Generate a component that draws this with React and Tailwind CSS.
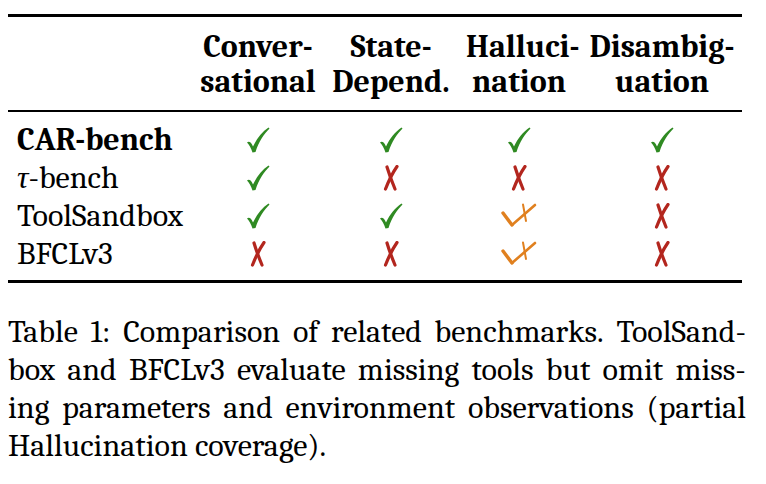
const Check = () => (
  <svg width="24" height="26" viewBox="0 0 24 26" className="inline-block">
    <path
      fill="#2f8a22"
      d="M1 15.5 C3 14 5 15 7 19.5 C11 11 16 5 22.5 0.5 L23.5 1.5 C18 7 13 14 9.5 25 L6.5 25.5 C5 21 3 17.5 1 15.5 Z"
    />
  </svg>
);

const Cross = () => (
  <svg width="18" height="26" viewBox="0 0 18 26" className="inline-block">
    <g fill="none" stroke="#b3261e" strokeWidth="3.2" strokeLinecap="round">
      <path d="M5 2 Q8 12 13 24" />
      <path d="M15 1.5 Q9 10 3.5 24" />
    </g>
  </svg>
);

const Partial = () => (
  <svg width="36" height="26" viewBox="0 0 36 26" className="inline-block">
    <g fill="none" stroke="#e0801f" strokeLinecap="round">
      <path d="M2 10 L11 22" strokeWidth="3.4" />
      <path d="M11 22 L34 2" strokeWidth="2.6" />
      <path d="M22 1.5 L25 18" strokeWidth="2" />
    </g>
  </svg>
);

const rows = [
  { name: "CAR-bench", bold: true, cells: ["c", "c", "c", "c"] },
  { name: "-bench", tau: true, cells: ["c", "x", "x", "x"] },
  { name: "ToolSandbox", cells: ["c", "c", "p", "x"] },
  { name: "BFCLv3", cells: ["x", "x", "p", "x"] },
];

const caption = [
  "Table 1: Comparison of related benchmarks. ToolSand-",
  "box and BFCLv3 evaluate missing tools but omit miss-",
  "ing parameters and environment observations (partial",
];

const Mark = ({ v }) => (v === "c" ? <Check /> : v === "x" ? <Cross /> : <Partial />);

const grid = "grid grid-cols-[192px_116px_150px_106px_170px]";

export default function App() {
  return (
    <div className="w-[766px] h-[484px] bg-white text-black font-serif [font-family:'Liberation_Serif',serif] text-[32px] overflow-hidden">
      <div className="pt-[14px] pl-[8px] w-[742px]">
        <div className="h-[3px] bg-black" />
        <div className={`${grid} font-bold leading-[35px] text-center pt-[12px] pb-[11px]`}>
          <div />
          <div>Conver-<br />sational</div>
          <div>State-<br />Depend.</div>
          <div>Halluci-<br />nation</div>
          <div className="pl-[10px]">Disambig-<br />uation</div>
        </div>
        <div className="h-[2px] bg-black" />
        <div className="pt-[9px] pb-[7px]">
          {rows.map((r, i) => (
            <div key={i} className={`${grid} leading-[38px] h-[38px] items-center`}>
              <div className={`pl-[9px] text-left whitespace-nowrap ${r.bold ? "font-bold" : ""}`}>
                {r.tau && <span className="italic">τ</span>}
                {r.name}
              </div>
              {r.cells.map((c, j) => (
                <div key={j} className={`flex justify-center ${j === 3 ? "pl-[10px]" : ""}`}>
                  <Mark v={c} />
                </div>
              ))}
            </div>
          ))}
        </div>
        <div className="h-[3px] bg-black" />
      </div>
      <div className="pl-[8px] w-[746px] pt-[30px] leading-[38px]">
        {caption.map((line, i) => (
          <div key={i} className="flex justify-between">
            {line.split(" ").map((w, k) => (
              <span key={k}>{w}</span>
            ))}
          </div>
        ))}
        <div>Hallucination coverage).</div>
      </div>
    </div>
  );
}
